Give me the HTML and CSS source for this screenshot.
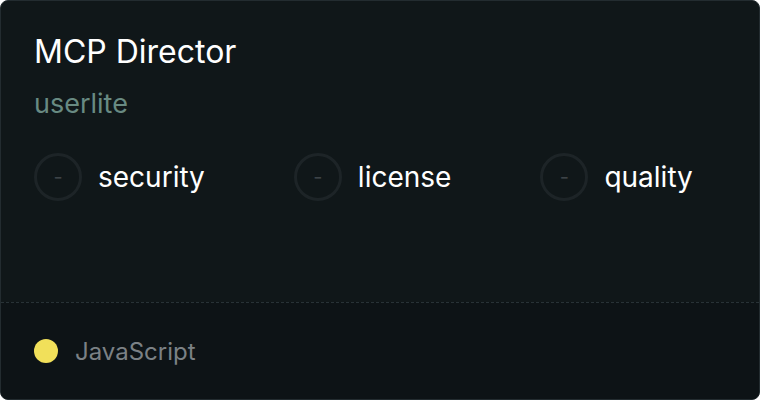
FILE: index.html
```html
<!DOCTYPE html>
<html lang="en">
<head>
  <meta charset="UTF-8">
  <title>MCP Director</title>
  <link rel="stylesheet" href="styles.css">
</head>
<body>

  <div class="card">
    <div class="card-main">
      <h1 class="title">MCP Director</h1>
      <p class="owner">userlite</p>

      <div class="scores">
        <div class="score">
          <span class="ring">-</span>
          <span class="label">security</span>
        </div>
        <div class="score">
          <span class="ring">-</span>
          <span class="label">license</span>
        </div>
        <div class="score">
          <span class="ring">-</span>
          <span class="label">quality</span>
        </div>
      </div>
    </div>

    <div class="card-footer">
      <span class="lang-dot"></span>
      <span class="lang">JavaScript</span>
    </div>
  </div>

</body>
</html>
```

FILE: styles.css
```css
body {
  margin: 0;
  padding: 0;
  background: #fff;
  font-family: Inter, "Noto Sans", sans-serif;
}
.card {
  width: 760px;
  height: 400px;
  box-sizing: border-box;
  border: 1px solid #232c30;
  border-radius: 8px;
  background: #101719;
  display: flex;
  flex-direction: column;
  overflow: hidden;
}
.card-main {
  flex: 1;
  padding: 32px 33px 0;
}
.title {
  margin: 0;
  font-size: 32px;
  font-weight: 400;
  line-height: 38px;
  color: #fff;
}
.owner {
  margin: 17px 0 0;
  font-size: 27px;
  line-height: 32px;
  color: #688a82;
}
.scores {
  display: flex;
  gap: 89px;
  margin-top: 33px;
}
.score {
  display: flex;
  align-items: center;
  gap: 16px;
}
.ring {
  width: 48px;
  height: 48px;
  box-sizing: border-box;
  border: 3px solid #1d2427;
  border-radius: 50%;
  display: flex;
  align-items: center;
  justify-content: center;
  color: #3d4347;
  font-size: 20px;
}
.label {
  font-size: 28px;
  color: #fff;
}
.card-footer {
  height: 96px;
  flex: none;
  border-top: 1px dashed #283236;
  background: #0d1316;
  display: flex;
  align-items: center;
  gap: 17px;
  padding: 0 33px;
}
.lang-dot {
  width: 24px;
  height: 24px;
  border-radius: 50%;
  background: #f1e05a;
}
.lang {
  font-size: 24px;
  color: #7b8185;
}
```
